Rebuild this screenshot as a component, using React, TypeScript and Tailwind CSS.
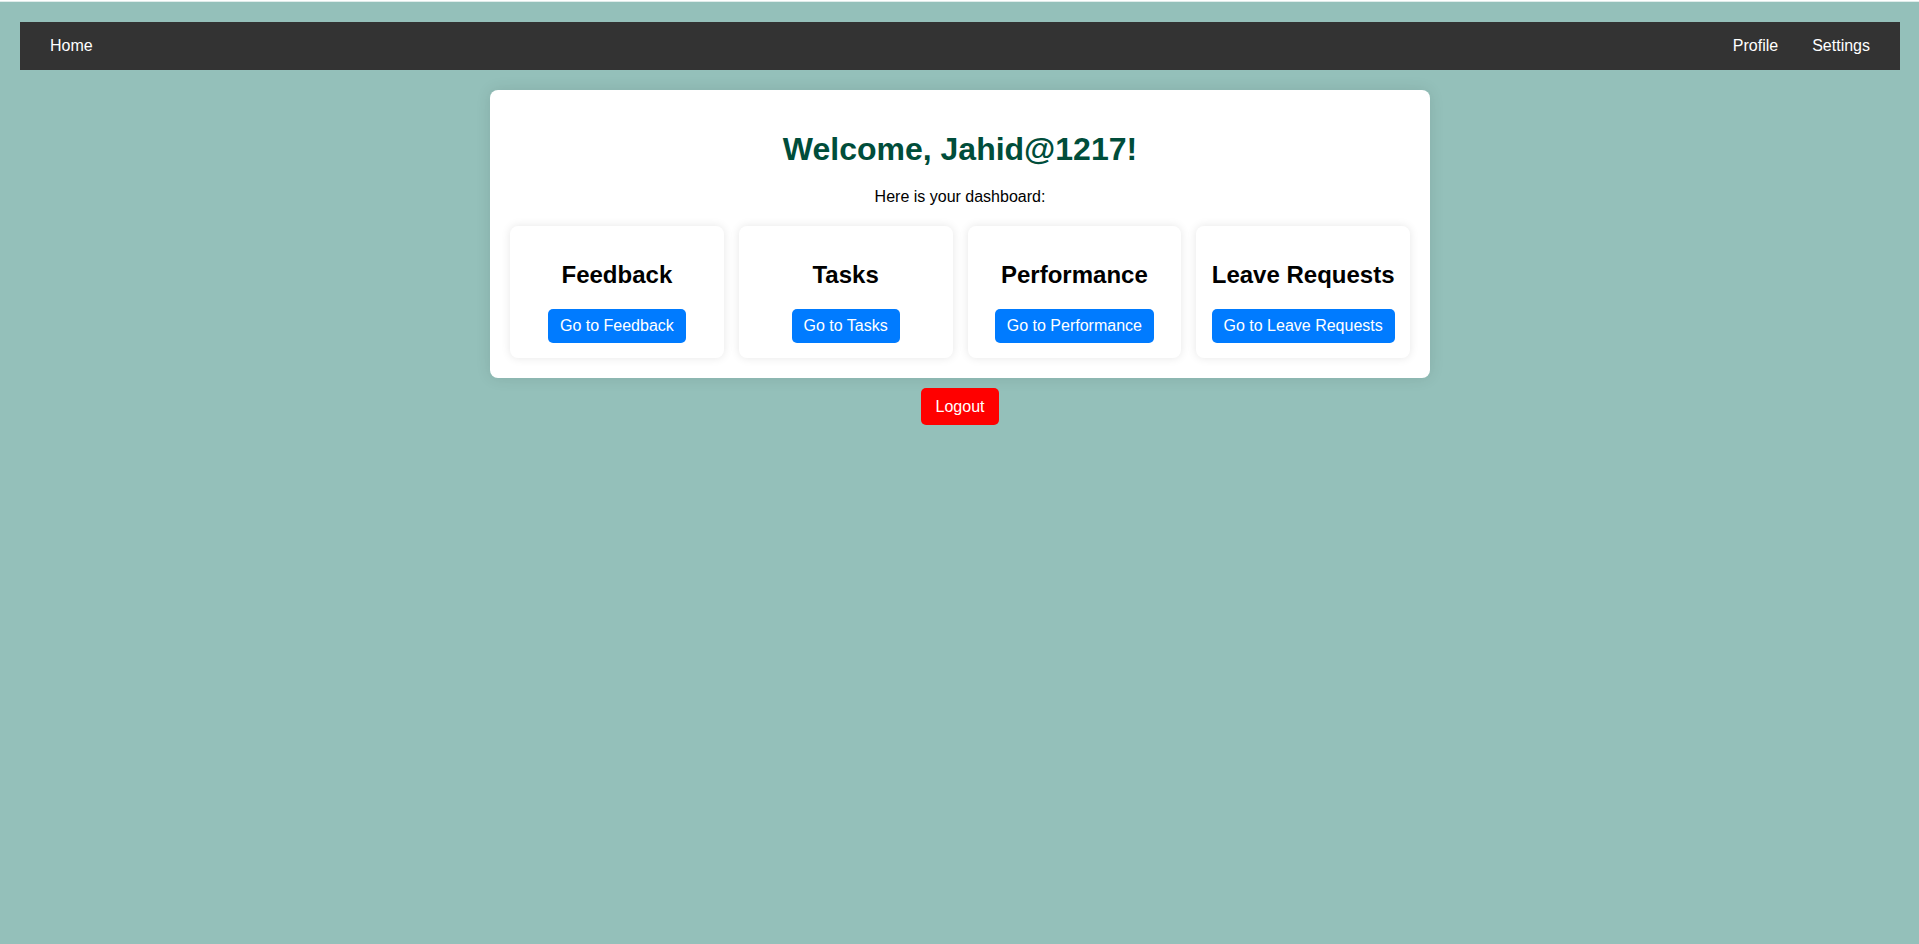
const cards = ["Feedback", "Tasks", "Performance", "Leave Requests"];

export default function App() {
  return (
    <div className="flex min-h-screen flex-col border-t border-white bg-[#94c0ba] font-['Liberation_Sans',Arial,sans-serif] text-base leading-[18px] text-black">
      <div className="h-px bg-[#dfecea]" />
      <div className="flex flex-col py-5 pr-[19px] pl-5">
        <nav className="flex items-center justify-between bg-[#333333] px-[30px] py-[15px] text-white">
          <a href="#home">Home</a>
          <div className="flex gap-[34px]">
            <a href="#profile">Profile</a>
            <a href="#settings">Settings</a>
          </div>
        </nav>

        <main className="mx-auto mt-5 w-1/2 rounded-lg bg-white p-5 text-center shadow-[0_0_15px_rgba(0,0,0,0.1)]">
          <h1 className="mt-5 text-[32px] leading-[38px] font-bold text-[#004d3a]">
            Welcome, Jahid@1217!
          </h1>
          <p className="mt-5">Here is your dashboard:</p>
          <div className="mt-5 grid grid-cols-4 gap-[15px]">
            {cards.map((name) => (
              <section
                key={name}
                className="flex flex-col items-center rounded-lg bg-white px-3 py-[15px] shadow-[0_0_10px_rgba(0,0,0,0.1)]"
              >
                <h2 className="mt-5 mb-5 text-2xl leading-7 font-bold whitespace-nowrap">
                  {name}
                </h2>
                <a
                  href={`#${name.toLowerCase().replace(" ", "-")}`}
                  className="rounded-[5px] bg-[#007bff] px-3 py-2 whitespace-nowrap text-white"
                >
                  Go to {name}
                </a>
              </section>
            ))}
          </div>
        </main>

        <button
          type="button"
          className="mx-auto mt-2.5 cursor-pointer rounded-[5px] bg-[#ff0000] px-[15px] py-2.5 leading-[17px] text-white"
        >
          Logout
        </button>
      </div>
    </div>
  );
}
